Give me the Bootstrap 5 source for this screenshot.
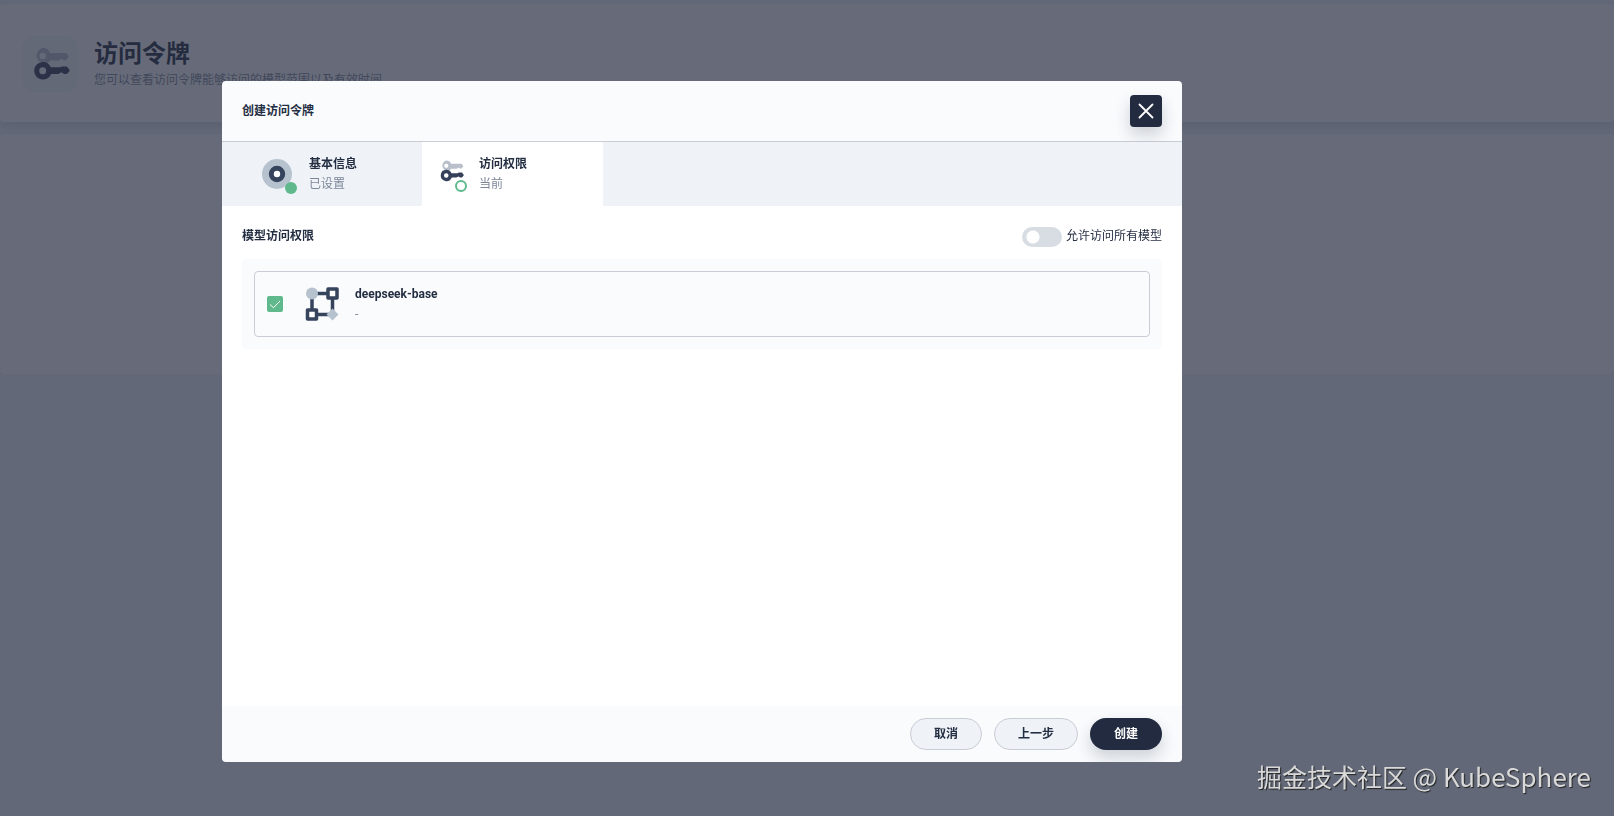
<!DOCTYPE html>
<html lang="zh-CN">
<head>
<meta charset="utf-8">
<meta name="viewport" content="width=device-width, initial-scale=1">
<title>访问令牌</title>
<link href="https://cdn.jsdelivr.net/npm/bootstrap@5.3.0/dist/css/bootstrap.min.css" rel="stylesheet">
<style>
  body { background: #eff4f9; color: #242e42; font: 12px/20px Roboto, "Noto Sans CJK SC", sans-serif; overflow: hidden; }
  .panel { background: #fff; border-radius: 4px; box-shadow: 0 4px 8px rgba(36, 46, 66, .12); }
  .page-head { padding: 32px 22px 30px; margin-top: 4px; }
  .page-icon { width: 56px; height: 56px; background: #f3f7fa; border-radius: 12px; }
  .page-title { font-size: 24px; line-height: 32px; }
  .muted { color: #7d8799; }
  .list-panel { height: 240px; margin-top: 12px; }

  .modal-backdrop { --bs-backdrop-bg: #262c40; --bs-backdrop-opacity: .7; }
  .create-dialog { max-width: 960px; margin: 81px 222px 54px; min-height: calc(100vh - 135px); display: flex; }
  .create-dialog .modal-content { border: 0; border-radius: 4px; overflow: hidden; color: #242e42; }
  .create-dialog .modal-header { height: 61px; padding: 0 20px; background: #f9fbfd; border-bottom: 1px solid #c9cdd5; }
  .dialog-name { font-size: 12px; line-height: 20px; }
  .btn-dark-solid, .btn-dark-solid:hover { background: #232b40; color: #fff; box-shadow: 0 8px 16px rgba(36, 46, 66, .2); }
  .btn-shut { width: 32px; height: 32px; border-radius: 4px; }
  .steps { background: #eff3f8; }
  .step { height: 64px; border: 0; background: transparent; color: inherit; text-align: left; gap: 12px; }
  .step-done { width: 200px; padding: 0 40px 0 35px; }
  .step-now { width: 181px; padding: 0 16px 0 12px; background: #fff; }
  .modal-body { padding: 20px; }
  .body-head { margin-bottom: 12px; }
  .form-switch.all-models { padding: 0; min-height: 0; gap: 4px; }
  .form-switch.all-models .form-check-input { width: 40px; height: 20px; margin: 1px 0 0; border: 0; background-color: #d8dde3;
    background-image: radial-gradient(circle at 11px 10px, #fff 6px, transparent 7px); background-position: 0 0; background-size: 40px 20px; }
  .model-box { background: #f9fbfd; padding: 12px; border-radius: 4px; }
  .model-row { background: #f9fbfd; border: 1px solid #c9cdd5; border-radius: 4px; padding: 12px; height: 66px; }
  .model-row .form-check-input { width: 16px; height: 16px; margin: 0 22px 0 0; border-radius: 2px; border: 0; }
  .model-row .form-check-input:checked { background-color: #5fb98c;
    background-image: url("data:image/svg+xml,%3Csvg xmlns='http://www.w3.org/2000/svg' viewBox='0 0 16 16'%3E%3Cpath d='M3 8.5l3.5 3.2L13 5' fill='none' stroke='%23fff'/%3E%3C/svg%3E"); }
  .create-dialog .modal-footer { padding: 12px 20px; gap: 12px; border: 0; background: #f9fbfd; }
  .modal-footer .btn { margin: 0; height: 32px; padding: 0 23px; border-radius: 16px; font-size: 12px; line-height: 20px; font-weight: 700; }
  .btn-plain, .btn-plain:hover { background: #eff3f8; border: 1px solid #c9cdd5; color: #242e42; }
  .watermark { right: 23px; bottom: 22px; z-index: 1100; font: 25px/36px "Noto Sans CJK SC", sans-serif; color: #d9d9d9; text-shadow: 1px 1px 1px #222; }
  .watermark-user { font-size: 26px; }
</style>
</head>
<body>
<svg class="d-none" aria-hidden="true">
  <symbol id="key-pair" viewBox="0 0 40 40">
    <path fill="#b9c0cb" fill-rule="evenodd" d="M12.700 4a7.800 7.800 0 0 1 7.400 5H36.500l2.500 3.500-2.800 3.800h-2.500l-2-1.500-3 1.700h-8.200A7.800 7.800 0 1 1 12.700 4zm0 4.800a3.200 3.200 0 1 0 0 6.400 3.200 3.200 0 0 0 0-6.400z"/>
    <path fill="#36405a" fill-rule="evenodd" d="M12.700 18a8.800 8.800 0 0 1 8.100 5.300H30l2-.9h4.800l2.700 3.300v1.300l-2.500 3h-2.800l-3-1.700-2.700 1.700h-7.300A8.800 8.800 0 1 1 12.700 18zm0 5.300a3.500 3.500 0 1 0 0 7 3.500 3.500 0 0 0 0-7z"/>
  </symbol>
</svg>

<header class="panel page-head d-flex align-items-center">
  <div class="page-icon d-flex align-items-center justify-content-center flex-shrink-0">
    <svg width="40" height="40"><use href="#key-pair"/></svg>
  </div>
  <div class="ms-3">
    <h1 class="page-title fw-bold mb-0">访问令牌</h1>
    <p class="muted mb-0">您可以查看访问令牌能够访问的模型范围以及有效时间</p>
  </div>
</header>
<main class="panel list-panel"></main>

<div class="modal-backdrop show"></div>
<div class="modal show d-block" tabindex="-1" role="dialog" aria-labelledby="dialogTitle">
  <div class="modal-dialog create-dialog">
    <div class="modal-content">
      <div class="modal-header">
        <h2 class="dialog-name mb-0 fw-bold" id="dialogTitle">创建访问令牌</h2>
        <button type="button" class="btn btn-dark-solid btn-shut p-0 d-flex align-items-center justify-content-center" aria-label="关闭">
          <svg width="16" height="16" viewBox="0 0 16 16" fill="none" stroke="#fff" stroke-width="1.800" stroke-linecap="round"><path d="M1.500 1.500l13 13M14.500 1.500l-13 13"/></svg>
        </button>
      </div>

      <nav class="steps d-flex">
        <button type="button" class="step step-done d-flex align-items-center">
          <svg width="40" height="40" viewBox="0 0 40 40" class="flex-shrink-0">
            <circle cx="20" cy="20" r="15" fill="#b6c2cd"/>
            <circle cx="20" cy="20" r="5.700" fill="#fff" stroke="#36435c" stroke-width="5"/>
            <circle cx="34" cy="34" r="6" fill="#5fb98c"/>
          </svg>
          <span><strong class="d-block">基本信息</strong><span class="muted d-block">已设置</span></span>
        </button>
        <button type="button" class="step step-now d-flex align-items-center" aria-current="step">
          <svg width="33" height="40" viewBox="0 0 33 40" class="flex-shrink-0">
            <use href="#key-pair" x="4" y="4" width="26" height="26"/>
            <circle cx="27" cy="32" r="5" fill="#fff" stroke="#5fb98c" stroke-width="2"/>
          </svg>
          <span><strong class="d-block">访问权限</strong><span class="muted d-block">当前</span></span>
        </button>
      </nav>

      <div class="modal-body">
        <div class="body-head d-flex justify-content-between align-items-start">
          <strong>模型访问权限</strong>
          <div class="form-check form-switch all-models d-flex mb-0">
            <input class="form-check-input" type="checkbox" role="switch" id="allModels">
            <label for="allModels">允许访问所有模型</label>
          </div>
        </div>
        <div class="model-box">
          <div class="model-row d-flex align-items-center">
            <input class="form-check-input flex-shrink-0" type="checkbox" id="modelBase" checked>
            <svg width="34" height="34" viewBox="0 0 34 34" class="me-3 flex-shrink-0">
              <path d="M7 6.500h20.500v21H7z" fill="none" stroke="#36435c" stroke-width="3.500"/>
              <circle cx="7" cy="6.500" r="6" fill="#b6c2cd"/>
              <path d="M27.500 21.500l6 6-6 6-6-6z" fill="#b6c2cd"/>
              <path d="M23 2h9v9h-9zM2.500 23h9v9h-9z" fill="#fff" stroke="#36435c" stroke-width="3.500" stroke-linejoin="round"/>
            </svg>
            <label for="modelBase"><strong class="d-block">deepseek-base</strong><span class="muted d-block">-</span></label>
          </div>
        </div>
      </div>

      <div class="modal-footer">
        <button type="button" class="btn btn-plain">取消</button>
        <button type="button" class="btn btn-plain">上一步</button>
        <button type="button" class="btn btn-dark-solid">创建</button>
      </div>
    </div>
  </div>
</div>
<div class="watermark position-fixed">掘金技术社区 <span class="watermark-user">@ KubeSphere</span></div>
<script src="https://cdn.jsdelivr.net/npm/bootstrap@5.3.0/dist/js/bootstrap.bundle.min.js"></script>
</body>
</html>
